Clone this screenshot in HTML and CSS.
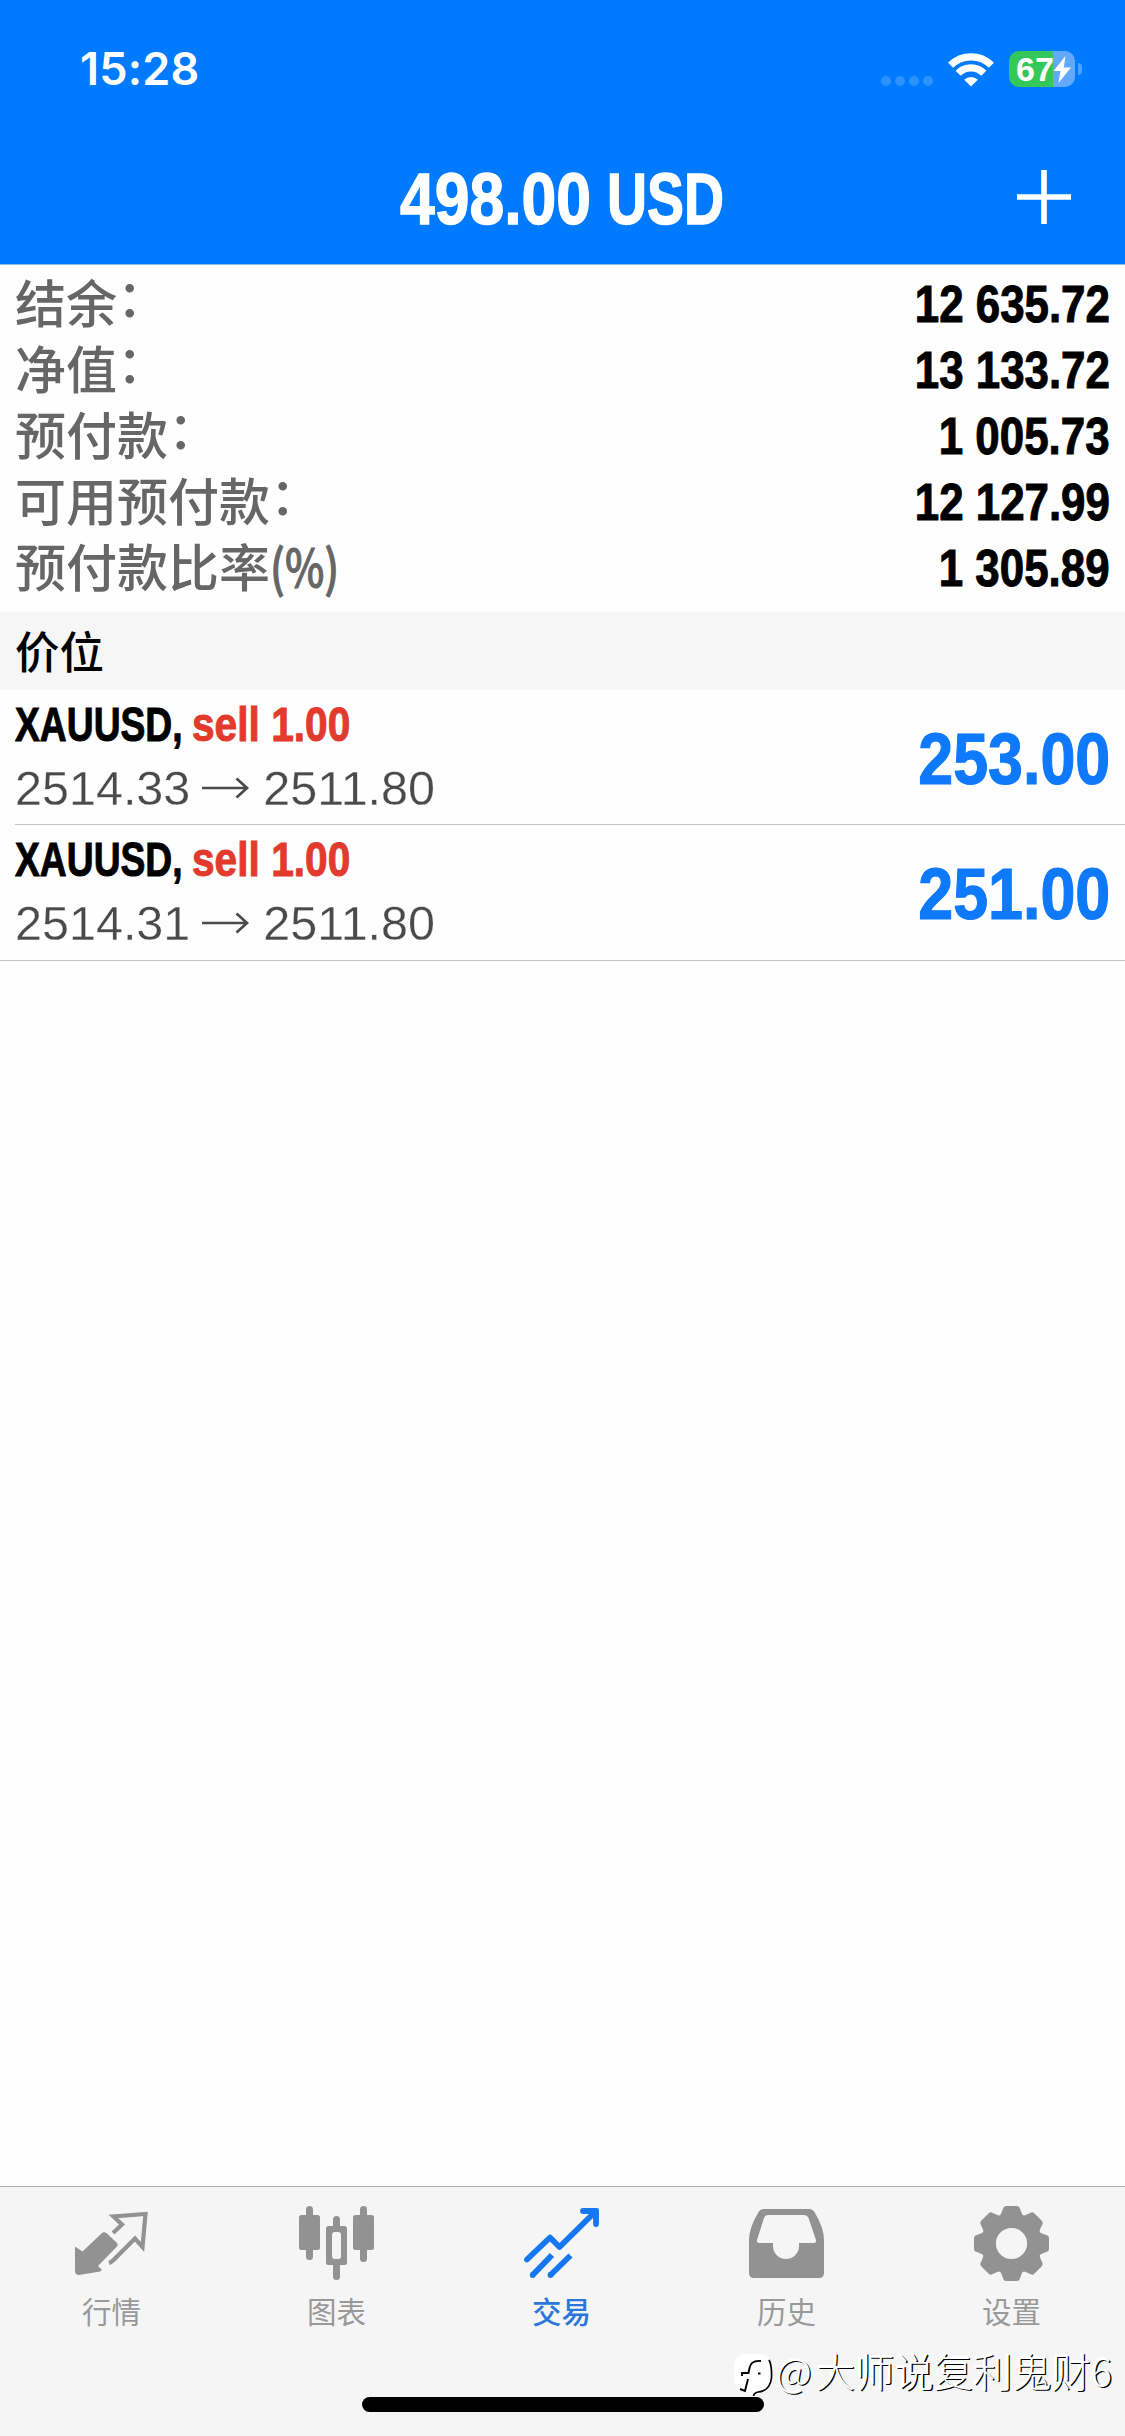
FILE: index.html
```html
<!DOCTYPE html>
<html lang="zh-CN">
<head>
<meta charset="utf-8">
<title>交易</title>
<link rel="stylesheet" href="styles.css">
</head>
<body>
<div class="app">
  <header class="header">
    <div class="status">
      <span class="time">15:28</span>
      <div class="indicators">
        <div class="signal"><i></i><i></i><i></i><i></i></div>
        <svg class="wifi" width="46" height="35" viewBox="0 0 46 35">
          <g fill="none" stroke="#fff" stroke-width="7.2">
            <path d="M2.6 13.2 A29 29 0 0 1 43.4 13.2"/>
            <path d="M10.2 21.2 A18 18 0 0 1 35.8 21.2"/>
          </g>
          <path d="M23 34.5 L16.2 27.7 A9.8 9.8 0 0 1 29.8 27.7 Z" fill="#fff"/>
        </svg>
        <div class="battery">
          <span class="level">67</span>
          <svg class="bolt" width="19" height="27" viewBox="0 0 19 27"><path d="M12.5 0 L0.5 15 H7.5 L5.5 27 L18 11.5 H10.8 Z" fill="#fff"/></svg>
        </div>
        <i class="nub"></i>
      </div>
    </div>
    <div class="nav">
      <h1 class="total"><span class="total-num">498.00</span><span class="total-cur">USD</span></h1>
      <svg class="plus" width="54" height="54" viewBox="0 0 54 54"><path d="M27 0V54M0 27H54" stroke="#fff" stroke-width="5.6"/></svg>
    </div>
  </header>

  <main class="content">
    <section class="account">
      <div class="row"><span class="label">结余<b class="colon">：</b></span><span class="value">12 635.72</span></div>
      <div class="row"><span class="label">净值<b class="colon">：</b></span><span class="value">13 133.72</span></div>
      <div class="row"><span class="label">预付款<b class="colon">：</b></span><span class="value">1 005.73</span></div>
      <div class="row"><span class="label">可用预付款<b class="colon">：</b></span><span class="value">12 127.99</span></div>
      <div class="row"><span class="label">预付款比率<span class="percent">(%)</span></span><span class="value">1 305.89</span></div>
    </section>
    <h2 class="section-title">价位</h2>
    <section class="positions">
      <article class="position">
        <div class="details">
          <div class="deal"><span class="symbol">XAUUSD,</span><span class="side">sell 1.00</span></div>
          <div class="prices"><span>2514.33</span><svg class="arrow" width="47" height="22" viewBox="0 0 47 22"><path d="M0 11H45M34.5 1.5L45 11L34.5 20.5"/></svg><span>2511.80</span></div>
        </div>
        <span class="profit">253.00</span>
      </article>
      <article class="position">
        <div class="details">
          <div class="deal"><span class="symbol">XAUUSD,</span><span class="side">sell 1.00</span></div>
          <div class="prices"><span>2514.31</span><svg class="arrow" width="47" height="22" viewBox="0 0 47 22"><path d="M0 11H45M34.5 1.5L45 11L34.5 20.5"/></svg><span>2511.80</span></div>
        </div>
        <span class="profit">251.00</span>
      </article>
    </section>
  </main>

  <nav class="tabs">
    <a class="tab">
      <svg width="75" height="75" viewBox="0 0 75 75">
        <path d="M1 40.5L8.5 45.5L27.5 27.5Q30 25 33 27.5L43 37Q44.500 39 43 40.500L24 60L28 64L26 65.500L5 69Q1 69 1 65Z" fill="#929292"/>
        <path d="M39 27L48 18.500L39.500 10.500L71.500 8L68.500 41L61 32.500L42.500 51Q38 56 35 57" fill="none" stroke="#929292" stroke-width="4.200"/>
      </svg>
      <span>行情</span>
    </a>
    <a class="tab">
      <svg width="75" height="75" viewBox="0 0 75 75" fill="#929292">
        <rect x="0" y="9" width="21" height="35" rx="2.500"/><rect x="7" y="0" width="7" height="54" rx="3.500"/>
        <path fill-rule="evenodd" d="M29.500 20H45.500Q48 20 48 22.500V56.500Q48 59 45.500 59H29.500Q27 59 27 56.500V22.500Q27 20 29.500 20ZM36 26Q33 26 33 29V50Q33 53 36 53H39Q42 53 42 50V29Q42 26 39 26Z"/>
        <path d="M34 21V13.500a3.500 3.500 0 0 1 7 0V21ZM34 58V70.500a3.500 3.500 0 0 0 7 0V58Z"/>
        <rect x="54" y="9" width="21" height="35" rx="2.500"/><rect x="61" y="0" width="7" height="56" rx="3.500"/>
      </svg>
      <span>图表</span>
    </a>
    <a class="tab active">
      <svg width="75" height="75" viewBox="0 0 75 75" fill="none" stroke="#1677f2" stroke-width="5.800" stroke-linejoin="round">
        <path d="M3 53.500L26 31.500L35.500 41L71 6M59 5H72V18" stroke-linecap="round"/>
        <path d="M28 49L8.700 69M46.500 49.500L26.500 69"/>
        <g fill="#1677f2" stroke="none"><circle cx="8.700" cy="69" r="2.900"/><circle cx="26.500" cy="69" r="2.900"/><path d="M60 2.500H74.500V17Z"/></g>
      </svg>
      <span>交易</span>
    </a>
    <a class="tab">
      <svg width="75" height="75" viewBox="0 0 75 75">
        <path fill-rule="evenodd" fill="#929292" d="M15 3H60Q64 3 66 7Q75 22 75 34V67Q75 72 70 72H5Q0 72 0 67V34Q0 22 9 7Q11 3 15 3ZM19 9Q16 9 15 12L8 34Q7.500 37 10 37H24V40A13 13 0 0 0 50 40V37H65Q67.500 37 67 34L59.500 12Q58 9 55 9Z"/>
      </svg>
      <span>历史</span>
    </a>
    <a class="tab">
      <svg width="75" height="75" viewBox="-37.500 -37.500 75 75">
        <defs><path id="tooth" d="M-13 -27Q-10.500 -28.500 -9.500 -32L-8 -36Q-7.300 -37.500 -5 -37.500H5Q7.300 -37.500 8 -36L9.500 -32Q10.500 -28.500 13 -27Z"/></defs>
        <circle r="22.500" fill="none" stroke="#929292" stroke-width="13.800"/>
        <g fill="#929292">
          <use href="#tooth"/><use href="#tooth" transform="rotate(45)"/><use href="#tooth" transform="rotate(90)"/><use href="#tooth" transform="rotate(135)"/>
          <use href="#tooth" transform="rotate(180)"/><use href="#tooth" transform="rotate(225)"/><use href="#tooth" transform="rotate(270)"/><use href="#tooth" transform="rotate(315)"/>
        </g>
      </svg>
      <span>设置</span>
    </a>
  </nav>

  <div class="home-bar"></div>
  <div class="watermark">
    <svg width="42" height="46" viewBox="0 0 42 46">
      <path d="M14 1H26Q38 1 38 14V24Q38 38 25 38Q22 39 20 43L18 39Q1 38 1 25V14Q1 1 14 1Z" fill="#fff"/>
      <path d="M36 7Q39 12 38.500 25Q37 38 25 39Q21 40 20.500 43" fill="none" stroke="#000" stroke-width="1.700"/>
      <path d="M28 8Q18 7 16.500 15L15.500 20H9V23M25 20.500H27.500M15 26L12 38L7 36" fill="none" stroke="#000" stroke-width="1.900"/>
    </svg>
    <span class="handle"><span class="at">@</span>大师说复利鬼财6</span>
  </div>
</div>
</body>
</html>
```
FILE: styles.css
```css
* { box-sizing: border-box; }

body {
  margin: 0;
  background: #fefefe;
  font-family: "Liberation Sans", "Noto Sans CJK SC", sans-serif;
}

.app {
  position: relative;
  display: flex;
  flex-direction: column;
  width: 1125px;
  height: 2436px;
  overflow: hidden;
}

/* Header */
.header {
  height: 265px;
  background: #007aff;
  border-bottom: 1px solid #8db8ec;
}

.status {
  display: flex;
  justify-content: space-between;
  align-items: center;
  height: 138px;
  padding: 0 43px 0 80px;
}

.time {
  font: 600 45px/54px Inter, sans-serif;
  color: #fff;
  letter-spacing: 0.2px;
}

.indicators { display: flex; align-items: center; }

.signal { display: flex; gap: 4px; margin: 23px 15px 0 0; }
.signal i { width: 10px; height: 10px; border-radius: 50%; background: #2b92ff; }

.battery {
  display: flex;
  align-items: center;
  width: 66px;
  height: 36px;
  margin-left: 15px;
  padding-left: 7px;
  border-radius: 10px;
  background: linear-gradient(90deg, #34c759 44px, #62a9fb 44px);
}

.level {
  width: 37px;
  font: 700 34px/36px "Liberation Sans", sans-serif;
  color: #fff;
}

.nub {
  width: 4px;
  height: 12px;
  margin-left: 3px;
  border-radius: 0 4px 4px 0;
  background: #4ba1ff;
}

.nav {
  display: grid;
  grid-template-columns: 1fr auto 1fr;
  align-items: center;
  height: 126px;
  padding: 0 54px 8px;
}

.total {
  grid-column: 2;
  display: flex;
  margin: 3px 0 0;
  font-size: 73px;
  line-height: 84px;
  color: #fff;
  -webkit-text-stroke: 1.4px #fff;
}
.total span { transform-origin: left center; white-space: nowrap; }
.total-num { width: 207px; transform: scaleX(0.855); }
.total-cur { width: 119px; transform: scaleX(0.76); }

.plus { justify-self: end; }

/* Account summary */
.content { flex: 1; }

.account { height: 347px; padding: 5px 15px 0; }

.row {
  display: flex;
  justify-content: space-between;
  height: 66px;
  line-height: 62px;
}

.label {
  font-family: "Noto Sans CJK SC", sans-serif;
  font-weight: 500;
  font-size: 51px;
  color: #666;
}
.colon { position: relative; top: -6px; font-weight: 500; }
.percent {
  display: inline-block;
  transform: scaleX(0.82);
  transform-origin: left center;
  -webkit-text-stroke: 1px #666;
}

.value {
  padding-top: 4px;
  font-weight: 700;
  font-size: 51px;
  color: #000;
  transform: scaleX(0.86);
  transform-origin: right center;
  -webkit-text-stroke: 1px #000;
}

.section-title {
  height: 78px;
  margin: 0;
  padding-left: 15px;
  background: #f6f6f6;
  font: 500 44.500px/75px "Noto Sans CJK SC", sans-serif;
  color: #000;
}

/* Open positions */
.position {
  display: flex;
  justify-content: space-between;
  height: 135px;
  margin-left: 15px;
  padding: 3px 15px 0 0;
  border-bottom: 1px solid #c6c6c8;
}
.position:last-child { height: 136px; margin-left: 0; padding-left: 15px; }

.deal {
  display: flex;
  height: 62px;
  font-weight: 700;
  font-size: 49px;
  line-height: 62px;
}
.deal span { transform-origin: left center; white-space: nowrap; }
.symbol { width: 177px; color: #000; transform: scaleX(0.76); -webkit-text-stroke: 1px #000; }
.side { color: #e23b2e; transform: scaleX(0.83); -webkit-text-stroke: 1px #e23b2e; }

.prices {
  display: flex;
  align-items: center;
  height: 64px;
  padding-top: 1px;
  font-size: 48.500px;
  line-height: 64px;
  color: #4a4a4a;
  -webkit-text-stroke: 0.3px #fefefe;
}
.arrow { margin: 0 14px 0 12px; fill: none; stroke: #4a4a4a; stroke-width: 2.700; }

.profit {
  font-weight: 700;
  font-size: 73px;
  line-height: 132px;
  color: #0f79fb;
  transform: scaleX(0.86);
  transform-origin: right center;
  -webkit-text-stroke: 1.2px #0f79fb;
}

/* Tab bar */
.tabs {
  display: grid;
  grid-template-columns: repeat(5, 225px);
  height: 250px;
  margin-left: -1px;
  padding-top: 19px;
  border-top: 1px solid #a9a9a9;
  width: 1127px;
  background: #f5f5f5;
}

.tab {
  display: flex;
  flex-direction: column;
  align-items: center;
  gap: 9px;
  font: 400 29.500px/40px "Noto Sans CJK SC", sans-serif;
  color: #999;
}
.active { color: #2b76d9; font-weight: 500; }

.home-bar {
  position: absolute;
  left: 362px;
  top: 2397px;
  width: 402px;
  height: 15px;
  border-radius: 8px;
  background: #000;
}

.watermark {
  position: absolute;
  left: 733px;
  top: 2353px;
  display: flex;
  align-items: flex-start;
  white-space: nowrap;
}

.handle {
  margin: -3px 0 0 1px;
  font: 300 39.300px/40px "Noto Sans CJK SC", sans-serif;
  color: #fff;
  text-shadow: 1.300px 1.300px 0 #000, -1px -1px 0 #fff;
}
.at { letter-spacing: 4px; }
```
